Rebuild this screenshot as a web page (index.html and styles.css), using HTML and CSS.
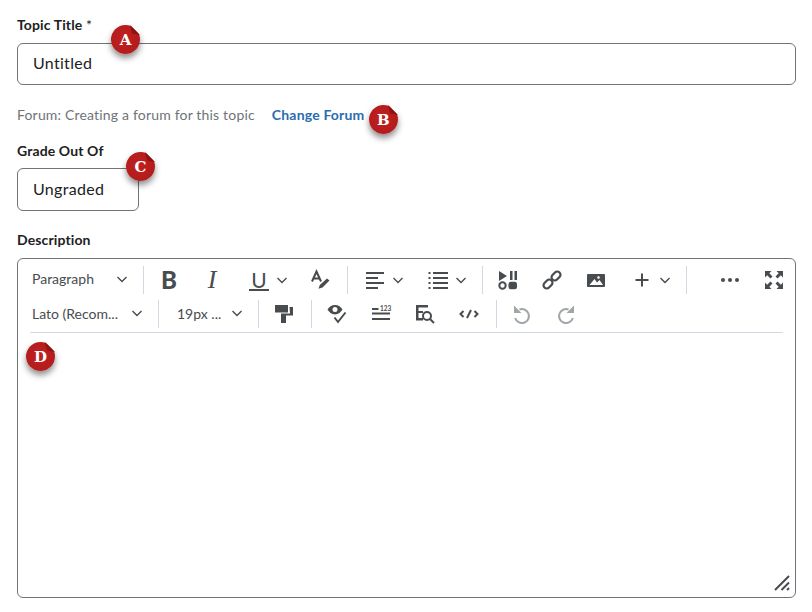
FILE: index.html
```html
<!DOCTYPE html>
<html lang="en">
<head>
<meta charset="utf-8">
<title>Topic</title>
<link rel="stylesheet" href="styles.css">
</head>
<body>
<main class="form">
  <div class="field field-title">
    <label class="label">Topic Title <span class="req">*</span></label>
    <input class="input" type="text" value="Untitled">
    <span class="badge badge-a">A</span>
  </div>
  <div class="forum-row">
    <span class="forum-text">Forum: Creating a forum for this topic</span>
    <a class="forum-link">Change Forum</a>
    <span class="badge badge-b">B</span>
  </div>
  <div class="field field-grade">
    <label class="label">Grade Out Of</label>
    <input class="input input-grade" type="text" value="Ungraded">
    <span class="badge badge-c">C</span>
  </div>
  <div class="field field-desc">
    <label class="label">Description</label>
    <div class="editor">
      <div class="toolbar">
        <div class="row row-1">
          <div class="sel w117"><span class="sel-text">Paragraph</span><svg class="chev" viewBox="0 0 12 8"><path d="M1.500 2L6 6.500 10.500 2"/></svg></div>
          <i class="sep"></i>
          <div class="btn w50"><span class="g-b">B</span></div>
          <div class="btn w36"><span class="g-i">I</span></div>
          <div class="btn w77"><span class="g-u">U</span><svg class="chev" viewBox="0 0 12 8"><path d="M1.500 2L6 6.500 10.500 2"/></svg></div>
          <div class="btn w26"><svg class="ico" viewBox="0 0 20 20"><path class="s" d="M2 11.500L6.500 1.500l4.500 10M3.500 8.500h6"/><path class="f" d="M17 8.500l2.500 2-7 7-4 1.200 1.300-3.700z"/></svg></div>
          <i class="sep sep-gap14"></i>
          <div class="btn w73"><svg class="ico" viewBox="0 0 20 20"><path class="s" d="M1 3h18M1 8h12M1 13h18M1 18h12"/></svg><svg class="chev" viewBox="0 0 12 8"><path d="M1.500 2L6 6.500 10.500 2"/></svg></div>
          <div class="btn w53"><svg class="ico" viewBox="0 0 20 20"><path class="s" d="M5 3h15M5 8h15M5 13h15M5 18h15M.5 3h2M.5 8h2M.5 13h2M.5 18h2"/></svg><svg class="chev" viewBox="0 0 12 8"><path d="M1.500 2L6 6.500 10.500 2"/></svg></div>
          <i class="sep sep-gap8"></i>
          <div class="btn w50"><svg class="ico" viewBox="0 0 20 20"><path class="f" d="M1 1l8 5-8 5zM12 1h2.500v9H12zM16.500 1H19v9h-2.500z"/><circle cx="4.500" cy="15.500" r="3.200" fill="none" stroke="#494c4e" stroke-width="2"/><rect x="10.500" y="11.800" width="8.500" height="7.400" rx="2.500" fill="#494c4e"/></svg></div>
          <div class="btn w38"><svg class="ico" viewBox="0 0 20 20"><rect class="s link" x="9" y="2.800" width="10" height="6.400" rx="3.200" transform="rotate(-45 14 6)"/><rect class="s link" x="1" y="10.800" width="10" height="6.400" rx="3.200" transform="rotate(-45 6 14)"/></svg></div>
          <div class="btn w50"><svg class="ico" viewBox="0 0 20 20"><path class="f" fill-rule="evenodd" d="M2 4h16a1 1 0 0 1 1 1v11a1 1 0 0 1-1 1H2a1 1 0 0 1-1-1V5a1 1 0 0 1 1-1zM3.500 15h13.500l-3.500-5-2.500 2.500-2.500-3.500zM12.500 6.200a1.300 1.300 0 1 0 0 2.600 1.300 1.300 0 0 0 0-2.600z"/></svg></div>
          <div class="btn w61"><svg class="ico" viewBox="0 0 20 20"><path class="s" d="M10 3.500v13M3.500 10h13"/></svg><svg class="chev" viewBox="0 0 12 8"><path d="M1.500 2L6 6.500 10.500 2"/></svg></div>
          <i class="sep sep-gap4"></i>
          <div class="btn w42 dots"><svg class="ico" viewBox="0 0 20 20"><circle cx="3" cy="10" r="2" fill="#494c4e"/><circle cx="10" cy="10" r="2" fill="#494c4e"/><circle cx="17" cy="10" r="2" fill="#494c4e"/></svg></div>
          <div class="btn w42 full"><svg class="ico" viewBox="0 0 20 20"><path class="f" d="M1 1h6.500L5.300 3.200 8.500 6.400 6.400 8.500 3.200 5.300 1 7.500zM19 1v6.500l-2.200-2.200-3.200 3.200-2.100-2.100 3.200-3.200L12.500 1zM1 19v-6.500l2.200 2.200 3.200-3.200 2.100 2.100-3.200 3.200L7.500 19zM19 19h-6.500l2.200-2.200-3.200-3.200 2.100-2.100 3.200 3.200 2.200-2.200z"/></svg></div>
        </div>
        <div class="row row-2">
          <div class="sel w132"><span class="sel-text trunc">Lato (Recom...</span><svg class="chev" viewBox="0 0 12 8"><path d="M1.500 2L6 6.500 10.500 2"/></svg></div>
          <i class="sep"></i>
          <div class="sel sel-size w99"><span class="sel-text">19px ...</span><svg class="chev" viewBox="0 0 12 8"><path d="M1.500 2L6 6.500 10.500 2"/></svg></div>
          <i class="sep"></i>
          <div class="btn w52"><svg class="ico" viewBox="0 0 20 20"><path class="f" d="M0 1h13v7.500H0zM14.500 3H18v8.500h-7V19H6V9.500h9z"/></svg></div>
          <i class="sep"></i>
          <div class="btn w50"><svg class="ico" viewBox="0 0 20 20"><path class="f" fill-rule="evenodd" d="M8 1c3.500 0 6 2 7.500 4.500C14 8 11.500 10.500 8 10.500S2 8 .5 5.500C2 3 4.500 1 8 1zm0 2a2.500 2.500 0 1 0 0 5 2.500 2.500 0 0 0 0-5z"/><path class="s" d="M7.500 13.500l3.500 4.500L18.500 8.500"/></svg></div>
          <div class="btn w38"><svg class="ico" viewBox="0 0 20 20"><path class="s" d="M1 5h6.500M1 9.500h18M1 15h18"/><text class="nums" x="9" y="7">123</text></svg></div>
          <div class="btn w50"><svg class="ico" viewBox="0 0 20 20"><path class="f" d="M1 1h12v2.500H3.500V7H8v2H3.500v5H8v2.500H1z"/><circle cx="12" cy="12" r="4" fill="none" stroke="#494c4e" stroke-width="2"/><path class="s" d="M15 15l4 4"/></svg></div>
          <div class="btn w38"><svg class="ico" viewBox="0 0 20 20"><path class="s" d="M4.500 7l-3 3 3 3M15.500 7l3 3-3 3M12 6l-4 8"/></svg></div>
          <i class="sep sep-gap8"></i>
          <div class="btn w50"><svg class="ico" viewBox="0 0 20 20"><path class="d" d="M7.500 5.500A7 7 0 1 1 3.200 14"/><path class="df" d="M2 1.500V9h7.500z"/></svg></div>
          <div class="btn w38"><svg class="ico" viewBox="0 0 20 20"><path class="d" d="M12.500 5.500A7 7 0 1 0 16.800 14"/><path class="df" d="M18 1.500V9h-7.500z"/></svg></div>
        </div>
      </div>
      <div class="rule"></div>
      <div class="body">
        <span class="badge badge-d">D</span>
        <svg class="grip" viewBox="0 0 16 16"><path d="M1 15L15 1M7.500 15L15 7.500M13 15l2-2"/></svg>
      </div>
    </div>
  </div>
</main>
</body>
</html>
```
FILE: styles.css
```css
* { box-sizing: border-box; }
html, body { margin: 0; padding: 0; background: #fff; }
body { font-family: "Lato", "Liberation Sans", sans-serif; color: #202122; overflow: hidden; }
.form { padding: 15px 16px 0 17px; width: 812px; height: 612px; }
.field { position: relative; }
.label { display: block; font-size: 14px; font-weight: 700; line-height: 20px; letter-spacing: .12px; color: #202122; margin-bottom: 8px; }
.req { font-weight: 400; }
.input {
  display: block; width: 100%; height: 42px; padding: 0 15px 4px;
  font-family: "Lato", sans-serif; font-size: 16px; letter-spacing: .3px; color: #202122;
  border: 1px solid #6e7477; border-radius: 6px; background: #fff; outline: none;
}
.forum-row { position: relative; display: flex; height: 20px; margin-top: 20px; line-height: 20px; font-size: 14px; letter-spacing: .18px; }
.forum-text { color: #6e7477; }
.forum-link { margin-left: 17px; color: #2a6cb0; font-weight: 700; }
.field-grade { margin-top: 16px; }
.field-grade .label { margin-bottom: 7px; }
.input-grade { width: 122px; height: 43px; padding-bottom: 2px; }
.field-desc { margin-top: 19px; }
.editor {
  display: flex; flex-direction: column; height: 340px;
  border: 1px solid #6e7477; border-radius: 6px; background: #fff;
}
.toolbar { margin: 4px 12px 0 8px; display: flex; flex-direction: column; }
.rule { flex: none; height: 1px; margin: 1px 12px 0; background: #d3d9e3; }
.row { display: flex; align-items: center; height: 34px; flex: none; }
.sep { display: block; flex: none; width: 1px; height: 28px; background: #d3d9e3; }
.sep-gap14 { margin-left: 14px; }
.sep-gap8 { margin-left: 8px; }
.sep-gap4 { margin-left: 4px; }
.sel { display: flex; align-items: center; justify-content: space-between; height: 34px; padding: 0 15px 0 6px; font-size: 14px; color: #494c4e; flex: none; }
.row-1 .sel { padding-bottom: 3px; }
.row-2 .sel { padding-bottom: 2px; }
.sel-size { padding-left: 18px; padding-right: 15px; }
.sel-text { white-space: nowrap; }
.btn { display: flex; align-items: center; justify-content: center; gap: 7px; height: 34px; flex: none; }
.w26 { width: 26px; } .w36 { width: 36px; } .w38 { width: 38px; } .w42 { width: 42px; }
.w50 { width: 50px; } .w52 { width: 52px; } .w53 { width: 53px; } .w61 { width: 61px; }
.w73 { width: 73px; } .w77 { width: 77px; } .w99 { width: 99px; } .w117 { width: 117px; } .w132 { width: 132px; }
.dots { margin-left: 22px; }
.full { margin-left: 2px; }
.ico { width: 20px; height: 20px; display: block; flex: none; overflow: visible; }
.chev { width: 12px; height: 8px; display: block; flex: none; fill: none; stroke: #494c4e; stroke-width: 1.400; }
.f { fill: #494c4e; }
.s { fill: none; stroke: #494c4e; stroke-width: 2; }
.link { stroke-width: 2.200; }
.d { fill: none; stroke: #a2a5a7; stroke-width: 2; }
.df { fill: #a2a5a7; }
.nums { font-family: "Lato", sans-serif; font-size: 6.500px; font-weight: 700; fill: #494c4e; }
.g-b { width: 20px; text-align: center; font-size: 24px; font-weight: 900; line-height: 20px; color: #494c4e; }
.g-i { font-family: "Liberation Serif", serif; font-style: italic; font-size: 26px; line-height: 20px; color: #494c4e; }
.g-u { width: 20px; height: 21px; text-align: center; font-size: 21px; line-height: 19px; color: #494c4e; border-bottom: 2px solid #494c4e; }
.body { position: relative; flex: 1; display: flex; align-items: flex-end; justify-content: flex-end; padding: 0 5px 6px 0; }
.grip { width: 16px; height: 16px; display: block; fill: none; stroke: #494c4e; stroke-width: 2; }
.badge {
  position: absolute; width: 29px; height: 29px; border-radius: 50%;
  display: flex; align-items: center; justify-content: center;
  font-family: "DejaVu Serif", serif; font-weight: 700; font-size: 15px; color: #fff;
  background: radial-gradient(circle at 45% 45%, #c12020 0, #ad1a1a 100%);
  box-shadow: 0 4px 6px rgba(0, 0, 0, .45);
}
.badge::before, .badge::after {
  content: ""; position: absolute; right: 0; top: 0; width: 10px; height: 10px;
}
.badge::before { background: #fff; clip-path: polygon(0 0, 100% 0, 100% 100%); }
.badge::after { background: linear-gradient(45deg, #a31515, #6e0d0d); clip-path: polygon(0 0, 100% 100%, 20% 85%); }
.badge-a { left: 94px; top: 10px; }
.badge-b { left: 352px; top: 0; }
.badge-c { left: 109px; top: 11px; }
.badge-d { left: 8px; top: 9px; }
```
